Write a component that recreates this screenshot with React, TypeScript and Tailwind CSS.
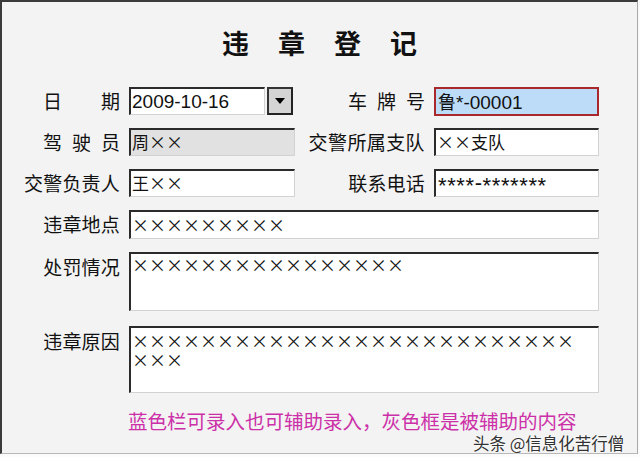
import React from "react";

const FONT = '"Noto Sans CJK SC", "Liberation Sans", sans-serif';
const LATIN = '"Liberation Sans", "Noto Sans CJK SC", sans-serif';

function Spaced({ chars }: { chars: string[] }) {
  return (
    <div className="ml-auto flex w-[77px] justify-between">
      {chars.map((c, i) => (
        <span key={i}>{c}</span>
      ))}
    </div>
  );
}

function Field({
  className = "",
  children,
}: {
  className?: string;
  children?: React.ReactNode;
}) {
  return (
    <div
      className={
        "border-t-2 border-l-2 border-r border-b border-t-[#2b2b2b] border-l-[#2b2b2b] border-r-[#d2d2d2] border-b-[#d2d2d2] pl-[1px] text-[17px] text-[#111] " +
        className
      }
    >
      {children}
    </div>
  );
}

export default function App() {
  return (
    <div className="relative h-[457px] w-[640px] bg-[#fbfbfb]" style={{ fontFamily: FONT }}>
      <div className="h-[454px] w-[638px] border-t-2 border-l-2 border-r border-b border-t-[#3a3a3a] border-l-[#3a3a3a] border-r-[#a8a8a8] border-b-[#b8b8b8] bg-[#f3f3f3] text-[19px] text-[#111]">
        {/* title */}
        <div className="flex justify-center gap-[29px] pt-[26px] text-[27px] font-bold leading-[30px]">
          <span>违</span>
          <span>章</span>
          <span>登</span>
          <span>记</span>
        </div>

        <div className="mt-[29px] flex flex-col gap-[13px]">
          {/* row 1 */}
          <div className="flex h-[28px] leading-[28px]">
            <div className="flex w-[118px]">
              <Spaced chars={["日", "期"]} />
            </div>
            <Field className="ml-[9px] h-[28px] w-[136px] bg-white leading-[24px]">
              <span style={{ fontFamily: LATIN }} className="text-[19px]">2009-10-16</span>
            </Field>
            <div className="ml-[2px] flex h-[28px] w-[26px] items-center justify-center border-2 border-t-[#333] border-l-[#333] border-r-[#222] border-b-[#222] bg-[#d4d4d4]">
              <div className="h-0 w-0 border-x-[5px] border-t-[6px] border-x-transparent border-t-black" />
            </div>
            <div className="flex w-[132px]">
              <Spaced chars={["车", "牌", "号"]} />
            </div>
            <div className="ml-[9px] h-[29px] w-[165px] border-2 border-[#a8282c] bg-[#bddcf8] pl-[2px] text-[18px] leading-[24px]">
              鲁<span style={{ fontFamily: LATIN }} className="text-[19px]">*-00001</span>
            </div>
          </div>

          {/* row 2 */}
          <div className="flex h-[28px] leading-[28px]">
            <div className="flex w-[118px]">
              <Spaced chars={["驾", "驶", "员"]} />
            </div>
            <Field className="ml-[9px] h-[28px] w-[166px] bg-[#e1e1e1] leading-[24px]">周××</Field>
            <div className="w-[130px] text-right tracking-[0.4px]">交警所属支队</div>
            <Field className="ml-[9px] h-[28px] w-[165px] bg-white leading-[24px]">××支队</Field>
          </div>

          {/* row 3 */}
          <div className="flex h-[28px] leading-[28px]">
            <div className="w-[118px] text-right tracking-[0.2px]">交警负责人</div>
            <Field className="ml-[9px] h-[28px] w-[166px] bg-white leading-[24px]">王××</Field>
            <div className="w-[130px] text-right tracking-[0.2px]">联系电话</div>
            <Field className="ml-[9px] h-[28px] w-[165px] bg-white leading-[24px]">
              <span style={{ fontFamily: LATIN }} className="pl-[1px] text-[22px] tracking-[0.6px]">
                <span className="inline-block translate-y-[3px]">****</span>-
                <span className="inline-block translate-y-[3px]">*******</span>
              </span>
            </Field>
          </div>

          {/* row 4 */}
          <div className="flex h-[29px] leading-[28px]">
            <div className="w-[118px] text-right tracking-[0.2px]">违章地点</div>
            <Field className="ml-[9px] h-[29px] w-[470px] bg-white leading-[25px]">×××××××××</Field>
          </div>

          {/* penalty */}
          <div className="flex leading-[30px]">
            <div className="w-[118px] text-right tracking-[0.2px]">处罚情况</div>
            <Field className="ml-[9px] h-[59px] w-[470px] bg-white pt-[1px] leading-[19px]">××××××××××××××××</Field>
          </div>
        </div>

        {/* reason */}
        <div className="mt-[15px] flex leading-[30px]">
          <div className="w-[118px] text-right tracking-[0.2px]">违章原因</div>
          <Field className="ml-[9px] h-[67px] w-[470px] bg-white pt-[3px] leading-[19px]">
            <div className="break-all pr-[20px]">×××××××××××××××××××××××××××××</div>
          </Field>
        </div>

        <div className="mt-[18px] pl-[126px] text-[19.5px] leading-[20px] text-[#cc30a8]">
          蓝色栏可录入也可辅助录入，灰色框是被辅助的内容
        </div>
      </div>

      {/* watermark */}
      <div
        className="absolute left-[473px] top-[435px] text-[16.5px] leading-[16px] text-[#333]"
        style={{ textShadow: "0 0 2px #fff, 0 0 2px #fff" }}
      >
        头条 @信息化苦行僧
      </div>
    </div>
  );
}
